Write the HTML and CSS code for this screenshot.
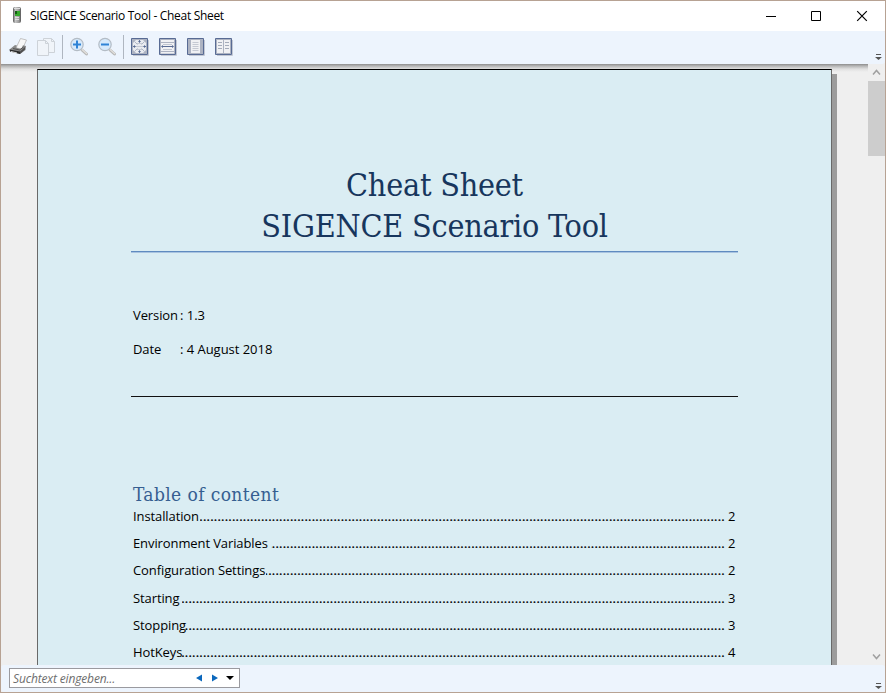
FILE: index.html
```html
<!DOCTYPE html>
<html lang="en">
<head>
<meta charset="utf-8">
<title>SIGENCE Scenario Tool - Cheat Sheet</title>
<link rel="stylesheet" href="styles.css">
</head>
<body>
<div class="window">
  <header class="titlebar">
    <svg class="app-icon" width="12" height="17" viewBox="0 0 12 17"><defs><linearGradient id="body" x2="1"><stop stop-color="#555"/><stop offset=".3" stop-color="#c4c4c4"/><stop offset=".75" stop-color="#999"/><stop offset="1" stop-color="#555"/></linearGradient></defs><rect x="1" y="0" width="8" height="16" rx="2" fill="url(#body)"/><path d="M2 1.500h6" stroke="#ddd"/><path d="M3 4h5v5H3z" fill="#35a92b"/><path d="M3 4h2v3H3z" fill="#155c12"/><path d="M3 10.500h4M3 12.500h4" stroke="#ddd"/></svg>
    <h1 class="caption">SIGENCE Scenario Tool - Cheat Sheet</h1>
    <div class="controls">
      <svg width="46" height="29" viewBox="0 0 46 29"><path d="M18 14.500h10" stroke="#000"/></svg>
      <svg width="46" height="29" viewBox="0 0 46 29"><path d="M17.500 9.500h9v9h-9z" fill="none" stroke="#000"/></svg>
      <svg width="46" height="29" viewBox="0 0 46 29"><path d="M17.200 9.200l9.600 9.600M26.800 9.200l-9.600 9.600" stroke="#000" stroke-width="1.200"/></svg>
    </div>
  </header>

  <nav class="toolbar">
    <svg class="tool" width="20" height="20" viewBox="0 0 20 20"><path d="M8 11L12.500 1.500l6 1.500-4 9z" fill="#f7f7f7" stroke="#b5b5b5" stroke-width=".8"/><path d="M1.500 12.500L7 8l2 .5-1 2 5 1.800 2-4 3 .7-.5 4L12 17l-9.500-2.500z" fill="#8a8a8a"/><path d="M1.500 12.500l10.500 2V17l-10-2.500z" fill="#2b2b2b"/><path d="M12 14.500l5-4.500v2.500L12 17z" fill="#505050"/><path d="M5 11.500l6.500 1.500 4-3" fill="none" stroke="#555"/><path d="M3 14.500l6 1.500" stroke="#ddd"/></svg>
    <svg class="tool" width="20" height="20" viewBox="0 0 20 20"><g fill="#f0f4f9" stroke="#cdd2d8"><path d="M7.500 1.500h8l3 3v11h-11z"/><path d="M15.500 1.500v3h3" fill="none"/><path d="M1.500 3.500h8l3 3v12h-11z"/><path d="M9.500 3.500v3h3" fill="none"/></g></svg>
    <i class="separator"></i>
    <svg class="tool" width="20" height="20" viewBox="0 0 20 20"><path d="M13 13l4.500 4" stroke="#b8b8b8" stroke-width="3" stroke-linecap="round"/><path d="M13 12.500l4.500 4" stroke="#e3e0dc" stroke-width="1.200" stroke-linecap="round"/><circle cx="8" cy="7.500" r="6.200" fill="#d6e9fb" stroke="#b4bcc5" stroke-width="1.200"/><path d="M4 7.500h8M8 3.500v8" stroke="#2f83d6" stroke-width="2"/></svg>
    <svg class="tool" width="20" height="20" viewBox="0 0 20 20"><path d="M13 13l4.500 4" stroke="#b8b8b8" stroke-width="3" stroke-linecap="round"/><path d="M13 12.500l4.500 4" stroke="#e3e0dc" stroke-width="1.200" stroke-linecap="round"/><circle cx="8" cy="7.500" r="6.200" fill="#d6e9fb" stroke="#b4bcc5" stroke-width="1.200"/><path d="M4 7.500h8" stroke="#2f83d6" stroke-width="2"/></svg>
    <i class="separator"></i>
    <svg class="tool" width="20" height="20" viewBox="0 0 20 20"><path d="M18.500 3v15.500H3" fill="none" stroke="#c3c8d3"/><path d="M1.500 1.500h16v16h-16z" fill="#adb3c2" stroke="#586b94"/><path d="M6 3h7l3 3v7l-3 3H6l-3-3V6z" fill="#e9ebf0"/><path d="M6 6.500h7M6 9.500h7M6 12.500h7" stroke="#c5c9d3"/><path d="M4.500 4.500l3 3M14.500 4.500l-3 3M4.500 14.500l3-3M14.500 14.500l-3-3" stroke="#b0b7c6"/><path d="M9.500 3v3M9.500 13v3M3 9.500h3M13 9.500h3" stroke="#8391b0"/><path d="M8 5l1.500-2L11 5zM8 14l1.500 2 1.500-2zM5 8L3 9.500 5 11zM14 8l2 1.500-2 1.500z" fill="#586b94"/></svg>
    <svg class="tool" width="20" height="20" viewBox="0 0 20 20"><path d="M18.500 3v15.500H3" fill="none" stroke="#c3c8d3"/><path d="M1.500 1.500h16v16h-16z" fill="#adb3c2" stroke="#586b94"/><path d="M3 3h13v2H3zM3 6h13v8H3zM3 15h13v1.500H3z" fill="#f0f1f4"/><path d="M5 7.500h9M5 12.500h9" stroke="#c0c5d0"/><path d="M4 9.500h11" stroke="#586b94"/><path d="M5 8L3 9.500 5 11zM14 8l2 1.500-2 1.500z" fill="#586b94"/></svg>
    <svg class="tool" width="20" height="20" viewBox="0 0 20 20"><path d="M18.500 3v15.500H3" fill="none" stroke="#c3c8d3"/><path d="M1.500 1.500h16v16h-16z" fill="#adb3c2" stroke="#586b94"/><path d="M5 3h9v13H5z" fill="#f0f1f4"/><path d="M6.500 5.500h6M6.500 7.500h6M6.500 9.500h6M6.500 11.500h6M6.500 13.500h6" stroke="#c5c9d3"/></svg>
    <svg class="tool" width="20" height="20" viewBox="0 0 20 20"><path d="M18.500 3v15.500H3" fill="none" stroke="#c3c8d3"/><path d="M1.500 1.500h16v16h-16z" fill="#adb3c2" stroke="#586b94"/><path d="M3 3h6v13H3zM10 3h6v13h-6z" fill="#f0f1f4"/><path d="M4 5.500h4M4 8.500h4M4 11.500h4M11 5.500h4M11 8.500h4M11 11.500h4" stroke="#a4abba"/></svg>
    <svg class="overflow" width="7" height="8" viewBox="0 0 7 8"><path d="M1 1.500h5" stroke="#555"/><path d="M0 4h7L3.500 7z" fill="#555"/></svg>
  </nav>

  <main class="viewer">
    <div class="canvas">
      <article class="page">
        <div class="title"><div class="t1">Cheat Sheet</div><div class="t2">SIGENCE Scenario Tool</div></div>
        <dl class="meta">
          <dt>Version</dt><dd>: 1.3</dd>
          <dt>Date</dt><dd>: 4 August 2018</dd>
        </dl>
        <h2 class="toc-title">Table of content</h2>
        <ul class="toc">
          <li><span>Installation</span><i class="dots"></i><b>2</b></li>
          <li><span>Environment Variables</span><i class="dots gap"></i><b>2</b></li>
          <li><span>Configuration Settings</span><i class="dots"></i><b>2</b></li>
          <li><span>Starting</span><i class="dots gap"></i><b>3</b></li>
          <li><span>Stopping</span><i class="dots near"></i><b>3</b></li>
          <li><span>HotKeys</span><i class="dots near"></i><b>4</b></li>
        </ul>
      </article>
    </div>
    <div class="scrollbar">
      <svg width="17" height="17" viewBox="0 0 17 17"><path d="M5 10.500l3.500-4 3.500 4" fill="none" stroke="#a0a0a0" stroke-width="1.500"/></svg>
      <div class="thumb"></div>
      <svg class="down" width="17" height="17" viewBox="0 0 17 17"><path d="M5 6.500l3.500 4 3.500-4" fill="none" stroke="#a0a0a0" stroke-width="1.500"/></svg>
    </div>
  </main>

  <footer class="findbar">
    <div class="search"><span>Suchtext eingeben...</span>
      <svg width="40" height="10" viewBox="0 0 40 10"><path d="M7 1.500v7L1 5zM17 1.500v7L23 5z" fill="#0b68bd"/><path d="M31 3h8l-4 4z" fill="#000"/></svg>
    </div>
    <svg class="overflow" width="7" height="8" viewBox="0 0 7 8"><path d="M1 1.500h5" stroke="#555"/><path d="M0 4h7L3.500 7z" fill="#555"/></svg>
  </footer>
</div>
</body>
</html>
```
FILE: styles.css
```css
* { box-sizing: border-box; }
body { margin: 0; font-family: "Open Sans", sans-serif; color: #000; }
svg { display: block; flex: none; }
.window { width: 886px; height: 693px; border: 1px solid #b7a293; display: flex; flex-direction: column; background: #efefef; overflow: hidden; }

.titlebar { height: 30px; flex: none; background: #fff; display: flex; align-items: center; padding-left: 11px; }
.app-icon { margin: 0 6px 2px 0; }
.caption { margin: 0 0 2px; font-size: 12px; font-weight: 400; letter-spacing: -0.31px; white-space: nowrap; }
.controls { display: flex; margin-left: auto; margin-right: -1px; }

.toolbar { height: 33px; flex: none; background: #edf4fd; display: flex; align-items: center; padding: 0 0 1px 7px; border-radius: 3px; }
.tool { margin-right: 8px; }
.separator { width: 1px; height: 24px; background: #afb6c0; margin: 0 6px 0 -2px; }
.overflow { margin-left: auto; margin-right: 3px; align-self: flex-end; margin-bottom: 2px; }

.viewer { flex: 1; min-height: 0; display: flex; }
.canvas { width: 867px; overflow: hidden; padding: 5px 0 0 36px; background: linear-gradient(#8c8c8c, #b5b5b5 2px, #e0e0e0 5px, #efefef 8px); }
.page { width: 795px; height: 1100px; border: 1px solid #696969; border-top-color: #000; background: #daedf3; box-shadow: 5px 5px 0 #9c9c9c; padding: 94px 93px 0; }

.title { height: 88px; padding-top: 1px; border-bottom: 1px solid #5f8bc0; box-shadow: 0 1px #a9c4e0; text-align: center; font-family: "DejaVu Serif Condensed", "DejaVu Serif", serif; font-stretch: condensed; font-size: 32px; line-height: 41px; color: #17365d; white-space: nowrap; letter-spacing: -0.22px; }
.meta { margin: 0; height: 145px; padding: 46px 2px 0; border-bottom: 1px solid #111; display: grid; grid-template-columns: 47px 1fr; grid-auto-rows: 34px; font-size: 13px; line-height: 34px; letter-spacing: -0.1px; white-space: nowrap; }
.meta dd { margin: 0; letter-spacing: -0.03px; }
.toc-title { margin: 84px 0 0 2px; height: 25px; font: condensed 400 19px/26px "DejaVu Serif Condensed", "DejaVu Serif", serif; color: #365f91; white-space: nowrap; letter-spacing: 0.4px; }
.toc { list-style: none; margin: 0; padding: 0 3px 0 2px; font-size: 13px; line-height: 20px; letter-spacing: -0.1px; }
.toc li { display: flex; height: 27.200px; }
.toc b { font-weight: 400; width: 7px; }
.dots { flex: 1; width: 0; margin: 0 3px 0 1px; overflow: hidden; display: flex; justify-content: flex-end; letter-spacing: 0.210px; font-style: normal; -webkit-text-stroke: 0.2px #000; }
.dots::before { content: "......................................................................................................................................................................................................"; white-space: nowrap; }
.gap { margin-left: 3px; }
.near { margin-left: -1px; }

.scrollbar { width: 17px; background: #efefef; display: flex; flex-direction: column; }
.thumb { height: 75px; background: #cdcdcd; }
.down { margin-top: auto; }

.findbar { height: 27px; flex: none; background: #edf4fd; display: flex; align-items: flex-start; padding: 3px 0 0 8px; border-radius: 3px; }
.search { width: 231px; height: 20px; border: 1px solid #9a9a9f; background: #fff; display: flex; align-items: center; justify-content: space-between; padding: 0 4px 0 3px; font-size: 12px; font-style: italic; color: #6d6d6d; white-space: nowrap; letter-spacing: -0.15px; }
```
